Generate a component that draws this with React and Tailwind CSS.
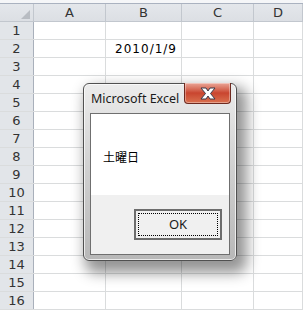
const cols = [
  { name: 'A', w: 'w-[72px]' },
  { name: 'B', w: 'w-[76px]' },
  { name: 'C', w: 'w-[72px]' },
  { name: 'D', w: 'flex-1' },
];

const rows = Array.from({ length: 16 }, (_, i) => i + 1);

function CloseButton() {
  return (
    <div className="absolute left-[100px] top-[-1px] flex h-[21px] w-[47px] items-center justify-center rounded-b-[4px] border border-t-0 border-[#6e2a20] bg-gradient-to-b from-[#e9a597] via-[#c9452f] to-[#d9704f] shadow-[inset_0_0_0_1px_rgba(255,255,255,0.35)]">
      <svg width="18" height="13" viewBox="0 0 18 13">
        <path
          d="M2 1 L7 1 L9 4 L11 1 L16 1 L11.5 6.5 L16 12 L11 12 L9 9 L7 12 L2 12 L6.5 6.5 Z"
          fill="#ffffff"
          stroke="#3b3b4a"
          strokeWidth="1"
          strokeLinejoin="round"
        />
      </svg>
    </div>
  );
}

function MessageBox() {
  return (
    <div className="absolute left-[83px] top-[83px] flex h-[178px] w-[154px] flex-col rounded-[6px] border border-[#505050] bg-gradient-to-b from-[#ececec] via-[#cfcfcf] to-[#b8b8b8] px-[6px] pb-[5px] pt-[29px] shadow-[6px_8px_14px_4px_rgba(0,0,0,0.42),inset_0_0_0_1px_rgba(255,255,255,0.7)]">
      <div className="absolute left-[7px] top-[7px] text-[12.5px] leading-[16px] text-[#1a1a1a] font-['Noto_Sans','DejaVu_Sans',sans-serif]">
        Microsoft Excel
      </div>
      <CloseButton />
      <div className="flex flex-1 flex-col border border-[#6f6f6f]">
        <div className="h-[81px] bg-white pl-[12px] pt-[36px] text-[12px] leading-[14px] text-black font-['Noto_Sans_CJK_JP',sans-serif]">
          土曜日
        </div>
        <div className="flex flex-1 justify-end bg-[#f0f0f0] pr-[7px] pt-[14px]">
          <div className="h-[31px] w-[88px] border-2 border-[#6d6d6d] bg-[#f0f0f0] p-[2px]">
            <div className="flex h-full w-full items-center justify-center border border-dotted border-black text-[13px] text-[#1a1a1a] font-['Noto_Sans','DejaVu_Sans',sans-serif]">
              OK
            </div>
          </div>
        </div>
      </div>
    </div>
  );
}

export default function App() {
  return (
    <div className="relative h-[310px] w-[303px] overflow-hidden bg-white text-[#333] font-['DejaVu_Sans',sans-serif]">
      <div className="h-[4px] border-b border-[#aab2c0] bg-[#f5f6f8]" />
      <div className="flex h-[18px] border-b border-[#c2c7ce] bg-gradient-to-b from-[#e4e7eb] to-[#dcdfe4]">
        <div className="relative w-[34px] border-r border-[#c2c7ce]">
          <div className="absolute bottom-[2px] right-[3px] h-0 w-0 border-b-[9px] border-l-[9px] border-b-[#b8bcc2] border-l-transparent" />
        </div>
        {cols.map((c) => (
          <div
            key={c.name}
            className={`${c.w} flex items-center justify-center border-r border-[#c2c7ce] text-[13px] leading-none`}
          >
            {c.name}
          </div>
        ))}
      </div>
      {rows.map((r) => (
        <div key={r} className="flex h-[18px] border-b border-[#dadcdd]">
          <div className="flex w-[34px] items-center justify-center border-r border-r-[#a9b0bb] bg-[#e2e5e9] text-[13px] leading-none">
            {r}
          </div>
          {cols.map((c) => (
            <div
              key={c.name}
              className={`${c.w} flex items-center justify-end border-r border-[#dadcdd] pr-[4px] text-[12px] leading-none tracking-[1px] text-black`}
            >
              {r === 2 && c.name === 'B' ? '2010/1/9' : ''}
            </div>
          ))}
        </div>
      ))}
      <MessageBox />
    </div>
  );
}
